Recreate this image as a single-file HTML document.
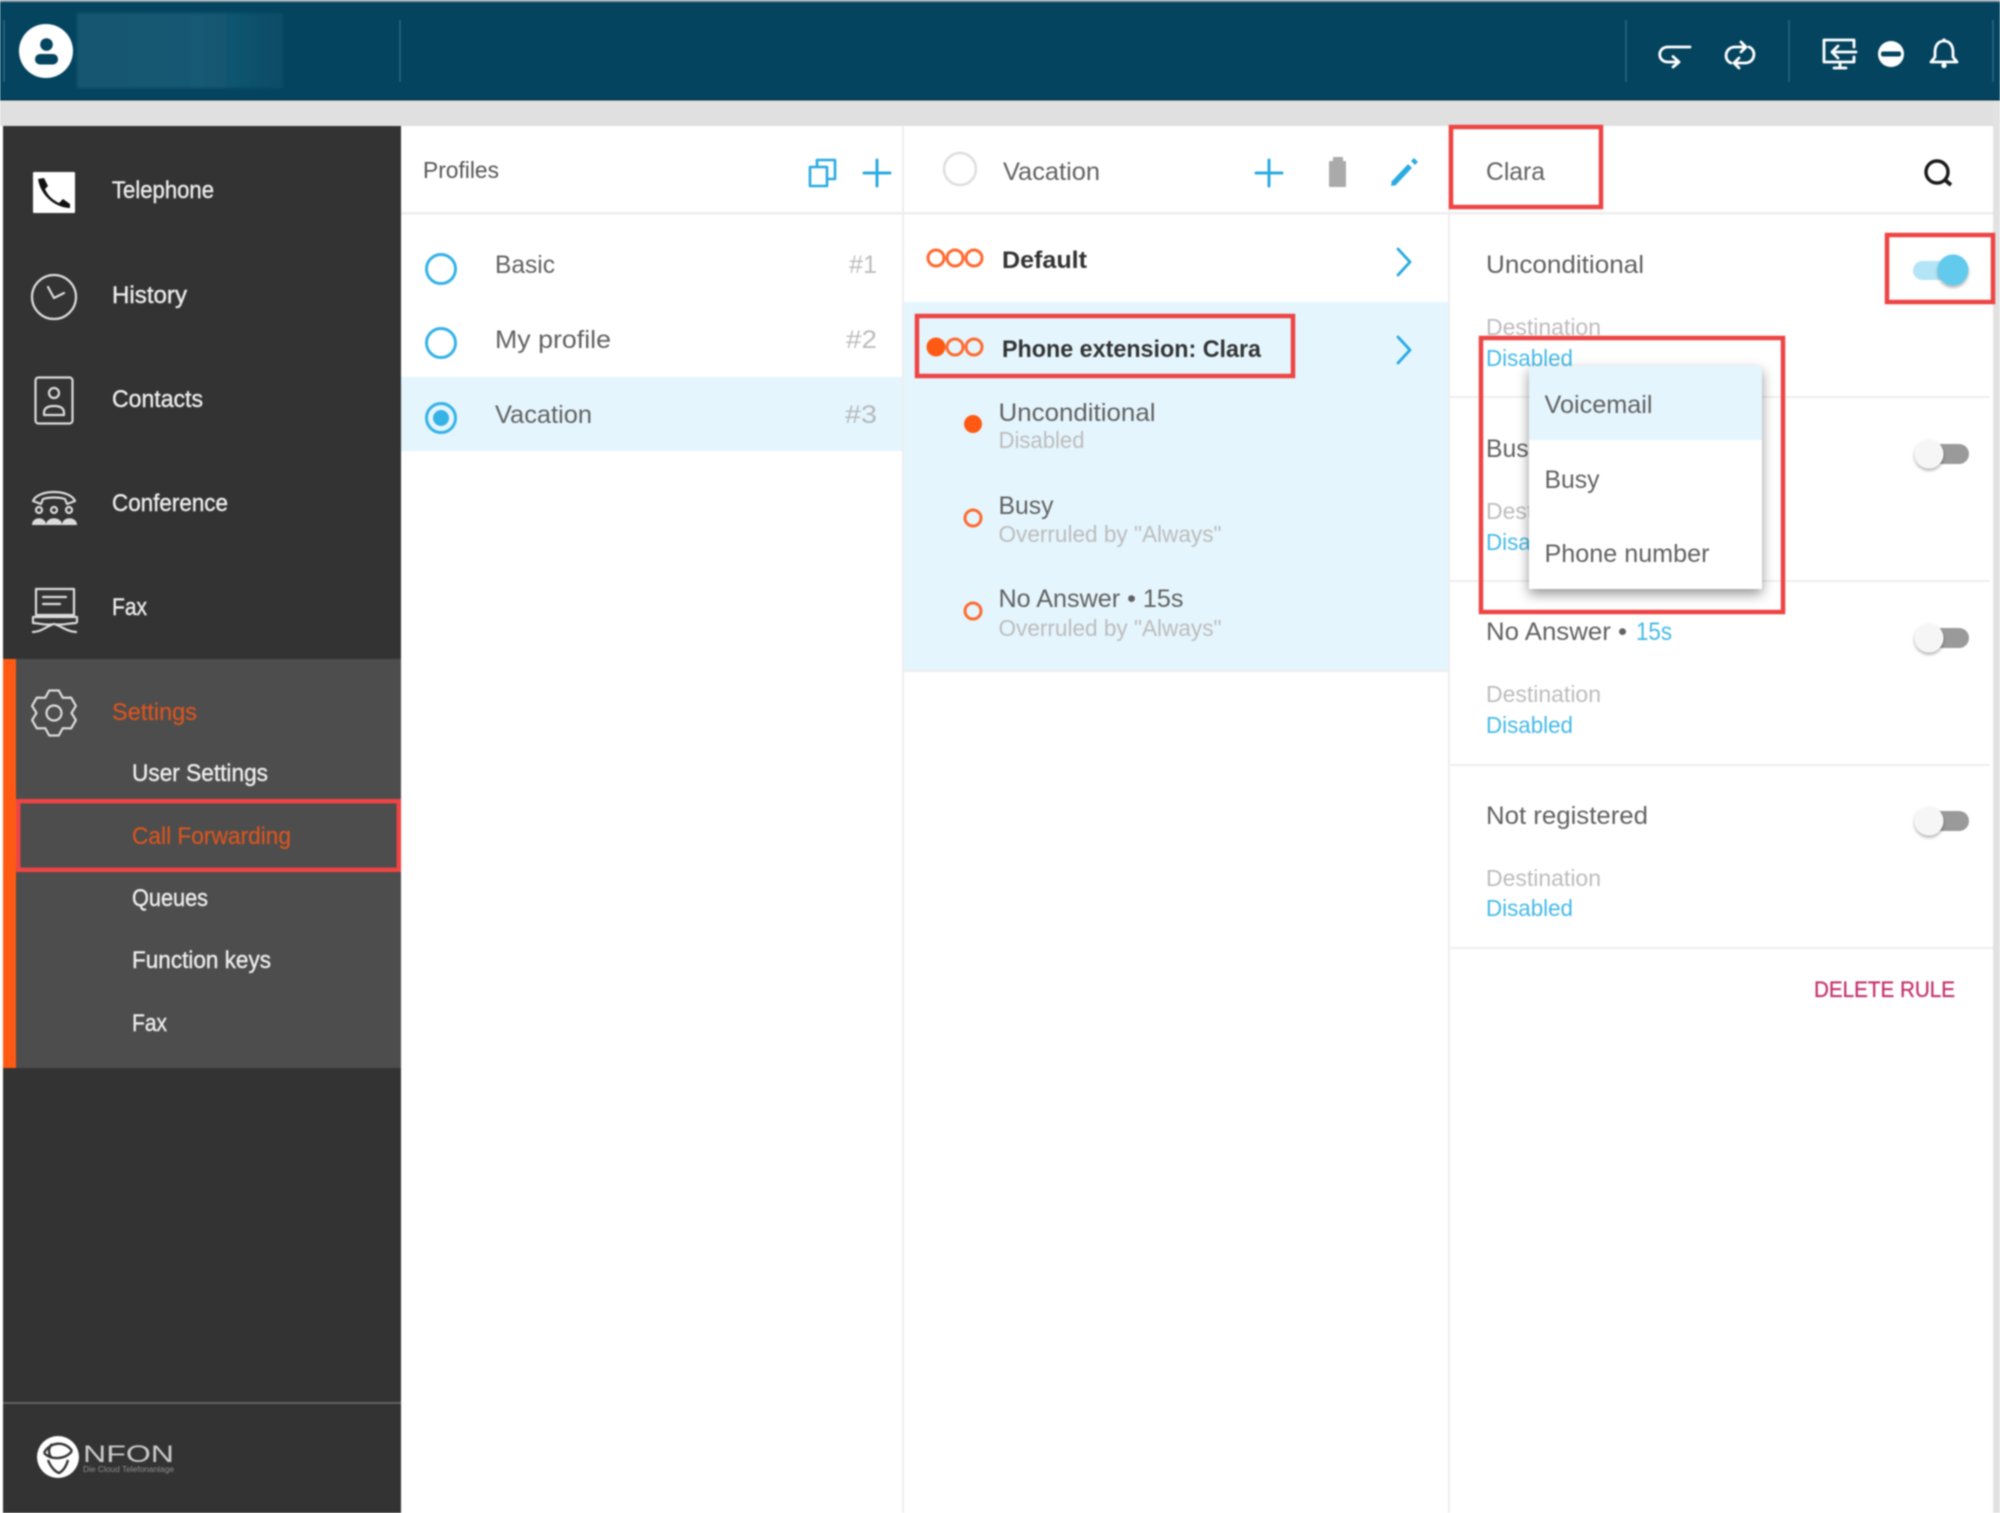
<!DOCTYPE html>
<html lang="en">
<head>
<meta charset="utf-8">
<title>Call Forwarding</title>
<style>
html,body{margin:0;padding:0;width:2000px;height:1513px;overflow:hidden;background:#fff}
svg{display:block;filter:blur(.8px)}
text{font-family:"Liberation Sans",Arial,sans-serif;font-size:25px;fill:#616161}
.side{fill:#ececec;font-size:24.5px;stroke:#ececec;stroke-width:.4}
.sub{font-size:23px;fill:#bcbcbc}
.blue{fill:#45b9e8}
.bold{font-weight:700;fill:#333;font-size:24.5px}
.side.or{fill:#d9551f;stroke:#d9551f;stroke-width:.2}
.ring{fill:none;stroke:#ff6a30;stroke-width:3}
.ico{fill:none;stroke:#dcdcdc;stroke-width:2.2;stroke-linejoin:round;stroke-linecap:round}
.hd{fill:none;stroke:#fff;stroke-width:2.8;stroke-linejoin:round;stroke-linecap:round}
.bl{fill:none;stroke:#2aaae2;stroke-width:3;stroke-linecap:round;stroke-linejoin:round}
.red{fill:none;stroke:#ee4444;stroke-width:4.5}
.sep{fill:#eeeeee}
</style>
</head>
<body>
<svg width="2000" height="1513" viewBox="0 0 2000 1513" xmlns="http://www.w3.org/2000/svg">
<defs>
<linearGradient id="nmg" x1="0" x2="1" y1="0" y2="0"><stop offset="0" stop-color="#14566f"/><stop offset=".6" stop-color="#155a74"/><stop offset="1" stop-color="#0a4c67"/></linearGradient>
<filter id="nm" x="-20%" y="-30%" width="140%" height="160%"><feGaussianBlur stdDeviation="1.5"/></filter>
<filter id="sh" x="-20%" y="-20%" width="140%" height="140%"><feDropShadow dx="0" dy="5" stdDeviation="6" flood-color="#000" flood-opacity=".42"/></filter>
<filter id="ks" x="-50%" y="-50%" width="200%" height="200%"><feDropShadow dx="0" dy="2" stdDeviation="1.6" flood-color="#000" flood-opacity=".32"/></filter>
</defs>

<!-- page backdrop -->
<rect width="2000" height="1513" fill="#fff"/>
<rect x="0" y="100" width="2000" height="26" fill="#e0e0e0"/>
<rect x="1993" y="100" width="7" height="1413" fill="#e2e2e2"/>

<!-- header -->
<rect width="2000" height="100" fill="#04445f"/>
<rect width="2000" height="2" fill="#8a9ca8"/>
<rect x="0" y="98.5" width="2000" height="2" fill="#033a52"/>
<g fill="#22607a">
<rect x="3" y="20" width="2" height="62"/><rect x="399" y="20" width="2" height="62"/>
<rect x="1625" y="20" width="2" height="62"/><rect x="1788" y="20" width="2" height="62"/><rect x="1992" y="20" width="2" height="62"/>
</g>
<rect x="77" y="13" width="206" height="75" fill="url(#nmg)" filter="url(#nm)"/>
<circle cx="46" cy="51" r="27" fill="#fff"/>
<circle cx="46.5" cy="44.5" r="6.3" fill="#04445f"/>
<rect x="35" y="54" width="23" height="10.5" rx="5" fill="#04445f"/>

<path class="hd" d="M1690 47H1668C1657 47 1657 62 1668 62H1678M1673 56.5L1679 62L1673 67"/>
<path class="hd" d="M1746 47H1735C1725 47 1723 60 1731 63M1741 42L1746 47L1741 52M1734 63H1745C1755 63 1757 50 1749 47M1739 58L1734 63L1739 68"/>
<path class="hd" d="M1854 47V40H1824V62H1854V57M1834 68H1846M1840 62V67M1856 52H1832M1838 46L1832 52L1838 58"/>
<circle cx="1891" cy="54" r="13" fill="#fff"/><rect x="1881" y="51.5" width="20" height="5" rx="2" fill="#04445f"/>
<path class="hd" d="M1944 41c-6 0-9 5-9 11v5l-4 5h26l-4-5v-5c0-6-3-11-9-11z"/><circle cx="1944" cy="65.5" r="2.6" fill="#fff"/><circle cx="1944" cy="40" r="1.6" fill="#fff"/>

<!-- sidebar -->
<rect x="3" y="126" width="398" height="1387" fill="#333"/>
<rect x="3" y="659" width="398" height="409" fill="#4d4d4d"/>
<rect x="3" y="659" width="13" height="409" fill="#ff5a14"/>
<rect x="3" y="1402" width="398" height="2" fill="#616161"/>

<rect x="33" y="172" width="42" height="41" rx="1" fill="#fff"/>
<path d="M38 179L44 178L48 186L45 189C48 196 53 200 59 203L63 199L70 204L70 208C58 208 41 198 38 179Z" fill="#111"/>
<text class="side" x="112" y="198" textLength="102" lengthAdjust="spacingAndGlyphs">Telephone</text>

<circle class="ico" cx="54" cy="297" r="22"/><path class="ico" d="M48 287L54 298L64 293"/>
<text class="side" x="112" y="303" textLength="75" lengthAdjust="spacingAndGlyphs">History</text>

<rect class="ico" x="35.5" y="377.5" width="37" height="46" rx="3"/><circle class="ico" cx="54" cy="393" r="5"/><path class="ico" d="M44 413c0-5 4-7 10-7s10 2 10 7v2h-20z"/>
<text class="side" x="112" y="407" textLength="91" lengthAdjust="spacingAndGlyphs">Contacts</text>

<path class="ico" d="M33 501c5-12 37-12 42 0l-8 3l-2-5c-6-2-16-2-22 0l-2 5z" stroke-width="2"/>
<g class="ico" stroke-width="1.8"><circle cx="39" cy="510" r="3"/><circle cx="54" cy="510" r="3"/><circle cx="69" cy="510" r="3"/></g>
<g fill="#dcdcdc"><path d="M32 525c0-9 14-9 14 0z"/><path d="M46 525c0-9 16-9 16 0z"/><path d="M62 525c0-9 15-9 15 0z"/></g>
<text class="side" x="112" y="511" textLength="116" lengthAdjust="spacingAndGlyphs">Conference</text>

<rect class="ico" x="36" y="589" width="38" height="26"/><path class="ico" d="M43 597H66M43 604H60M33 622V617H77V622M33 632c8 0 14-6 21-8c7 2 14 8 22 8M33 623c6 0 14 3 21 1c7 2 15-1 22-1"/>
<text class="side" x="112" y="615" textLength="35" lengthAdjust="spacingAndGlyphs">Fax</text>

<path class="ico" d="M49.2 690.5H58.8L62.75 697.8L71.1 697.6L75.9 705.9L71.5 713L75.9 720.1L71.1 728.4L62.75 728.2L58.8 735.5H49.2L45.25 728.2L36.9 728.4L32.1 720.1L36.5 713L32.1 705.9L36.9 697.6L45.25 697.8Z"/><circle class="ico" cx="54" cy="713" r="7.5"/>
<text class="side or" x="112" y="720" textLength="85" lengthAdjust="spacingAndGlyphs">Settings</text>
<text class="side" x="132" y="781" textLength="136" lengthAdjust="spacingAndGlyphs">User Settings</text>
<text class="side or" x="132" y="844" textLength="159" lengthAdjust="spacingAndGlyphs">Call Forwarding</text>
<rect class="red" x="18.2" y="801.2" width="380.6" height="68.6"/>
<text class="side" x="132" y="906" textLength="76" lengthAdjust="spacingAndGlyphs">Queues</text>
<text class="side" x="132" y="968" textLength="139" lengthAdjust="spacingAndGlyphs">Function keys</text>
<text class="side" x="132" y="1031" textLength="35" lengthAdjust="spacingAndGlyphs">Fax</text>

<circle cx="58" cy="1457" r="21" fill="#fff"/>
<path d="M44 1453c6-12 22-12 28-2M44 1453c8 8 22 6 28-2M48 1460c3 8 8 12 11 13c4-2 7-6 9-13M52 1444c-4 4-4 10 0 14" fill="none" stroke="#333" stroke-width="2.4"/>
<text x="83" y="1462" textLength="91" lengthAdjust="spacingAndGlyphs" style="font-size:24px;fill:#c9c9c9">NFON</text>
<text x="83" y="1472" textLength="91" lengthAdjust="spacingAndGlyphs" style="font-size:8px;fill:#8f8f8f">Die Cloud Telefonanlage</text>

<!-- column 1 -->
<rect x="401" y="212" width="1592" height="2.5" class="sep"/>
<rect x="902" y="126" width="2" height="1387" class="sep"/>
<rect x="1448" y="126" width="2" height="1387" class="sep"/>
<rect x="401" y="377" width="501" height="74" fill="#e4f5fd"/>
<text x="423" y="178" textLength="76" lengthAdjust="spacingAndGlyphs" style="font-size:23px;fill:#555">Profiles</text>
<path class="bl" d="M817 167V160H835V179H827M810 167H827V186H810Z" style="stroke-width:2.6"/>
<path class="bl" d="M877 160V186M864 173H890"/>
<circle cx="441" cy="269" r="14.5" fill="none" stroke="#35b2e6" stroke-width="3"/>
<circle cx="441" cy="343" r="14.5" fill="none" stroke="#35b2e6" stroke-width="3"/>
<circle cx="441" cy="418" r="14.5" fill="none" stroke="#35b2e6" stroke-width="3"/><circle cx="441" cy="418" r="8" fill="#35b2e6"/>
<text x="495" y="273" textLength="60" lengthAdjust="spacingAndGlyphs">Basic</text>
<text x="495" y="348" textLength="116" lengthAdjust="spacingAndGlyphs">My profile</text>
<text x="495" y="423" textLength="97" lengthAdjust="spacingAndGlyphs">Vacation</text>
<text x="849" y="273" textLength="28" lengthAdjust="spacingAndGlyphs" style="fill:#bcbcbc">#1</text>
<text x="846" y="348" textLength="31" lengthAdjust="spacingAndGlyphs" style="fill:#bcbcbc">#2</text>
<text x="845" y="423" textLength="32" lengthAdjust="spacingAndGlyphs" style="fill:#b4b8ba">#3</text>

<!-- column 2 -->
<circle cx="960" cy="169" r="16" fill="none" stroke="#dedede" stroke-width="2.5"/>
<text x="1003" y="180" textLength="97" lengthAdjust="spacingAndGlyphs">Vacation</text>
<path class="bl" d="M1269 160V186M1256 173H1282"/>
<rect x="1333" y="157" width="10" height="4" fill="#aaa"/><rect x="1329" y="161" width="17" height="26" rx="1" fill="#aaa"/>
<path d="M1393 184L1410 166" fill="none" stroke="#2aaae2" stroke-width="5.5"/><path d="M1413 163L1416 160" fill="none" stroke="#2aaae2" stroke-width="5.5"/>
<path d="M1391 186L1392 181L1396 185Z" fill="#2aaae2"/>

<circle class="ring" cx="936" cy="258" r="8"/><circle class="ring" cx="955" cy="258" r="8"/><circle class="ring" cx="974" cy="258" r="8"/>
<text class="bold" x="1002" y="268" textLength="85" lengthAdjust="spacingAndGlyphs">Default</text>
<path class="bl" d="M1398 249L1410 262L1398 275" style="stroke-width:2.8"/>

<rect x="904" y="302" width="544" height="368" fill="#e4f5fd"/>
<rect x="904" y="670" width="544" height="2" class="sep"/>
<circle cx="936" cy="347" r="9.5" fill="#ff5a14"/><circle class="ring" cx="955" cy="347" r="8"/><circle class="ring" cx="974" cy="347" r="8"/>
<text class="bold" x="1002" y="357" textLength="259" lengthAdjust="spacingAndGlyphs">Phone extension: Clara</text>
<path class="bl" d="M1398 337L1410 350L1398 363" style="stroke-width:2.8"/>
<rect class="red" x="917" y="316" width="376" height="60"/>

<circle cx="973" cy="424" r="9" fill="#ff5a14"/>
<text x="998.5" y="421" textLength="157" lengthAdjust="spacingAndGlyphs">Unconditional</text>
<text class="sub" x="998.5" y="448" textLength="86" lengthAdjust="spacingAndGlyphs">Disabled</text>
<circle class="ring" cx="973" cy="518" r="8"/>
<text x="998.5" y="514" textLength="55" lengthAdjust="spacingAndGlyphs">Busy</text>
<text class="sub" x="998.5" y="542" textLength="223" lengthAdjust="spacingAndGlyphs">Overruled by "Always"</text>
<circle class="ring" cx="973" cy="611" r="8"/>
<text x="998.5" y="607" textLength="185" lengthAdjust="spacingAndGlyphs">No Answer • 15s</text>
<text class="sub" x="998.5" y="636" textLength="223" lengthAdjust="spacingAndGlyphs">Overruled by "Always"</text>

<!-- column 3 -->
<rect class="red" x="1451" y="127" width="150" height="80"/>
<text x="1486" y="180" textLength="59" lengthAdjust="spacingAndGlyphs">Clara</text>
<circle cx="1937" cy="172" r="11" fill="none" stroke="#1a1a1a" stroke-width="3.4"/><path d="M1945 180L1951 185" stroke="#1a1a1a" stroke-width="3.8" fill="none"/>

<text x="1486" y="273" textLength="158" lengthAdjust="spacingAndGlyphs">Unconditional</text>
<rect class="red" x="1887" y="235" width="106" height="67"/>
<rect x="1913" y="261" width="52" height="19" rx="9.5" fill="#b3e5f7"/>
<circle cx="1953" cy="270" r="15.5" fill="#62cbed" filter="url(#ks)"/>
<text class="sub" x="1486" y="335" textLength="115" lengthAdjust="spacingAndGlyphs">Destination</text>
<text class="blue" x="1486" y="366" textLength="87" lengthAdjust="spacingAndGlyphs" style="font-size:23px">Disabled</text>
<rect x="1450" y="396" width="540" height="2" class="sep"/>

<text x="1486" y="457" textLength="55" lengthAdjust="spacingAndGlyphs">Busy</text>
<rect x="1921" y="444" width="48" height="20" rx="10" fill="#9a9a9a"/>
<circle cx="1929" cy="454" r="14.5" fill="#f6f6f6" filter="url(#ks)"/>
<text class="sub" x="1486" y="519" textLength="115" lengthAdjust="spacingAndGlyphs">Destination</text>
<text class="blue" x="1486" y="550" textLength="87" lengthAdjust="spacingAndGlyphs" style="font-size:23px">Disabled</text>
<rect x="1450" y="580" width="540" height="2" class="sep"/>

<text x="1486" y="640" textLength="141" lengthAdjust="spacingAndGlyphs">No Answer •</text>
<text class="blue" x="1636" y="640" textLength="36" lengthAdjust="spacingAndGlyphs">15s</text>
<rect x="1921" y="628" width="48" height="20" rx="10" fill="#9a9a9a"/>
<circle cx="1929" cy="638" r="14.5" fill="#f6f6f6" filter="url(#ks)"/>
<text class="sub" x="1486" y="702" textLength="115" lengthAdjust="spacingAndGlyphs">Destination</text>
<text class="blue" x="1486" y="733" textLength="87" lengthAdjust="spacingAndGlyphs" style="font-size:23px">Disabled</text>
<rect x="1450" y="764" width="540" height="2" class="sep"/>

<text x="1486" y="824" textLength="162" lengthAdjust="spacingAndGlyphs">Not registered</text>
<rect x="1921" y="811" width="48" height="20" rx="10" fill="#9a9a9a"/>
<circle cx="1929" cy="821" r="14.5" fill="#f6f6f6" filter="url(#ks)"/>
<text class="sub" x="1486" y="886" textLength="115" lengthAdjust="spacingAndGlyphs">Destination</text>
<text class="blue" x="1486" y="916" textLength="87" lengthAdjust="spacingAndGlyphs" style="font-size:23px">Disabled</text>
<rect x="1450" y="947" width="543" height="2" class="sep"/>

<text x="1814" y="997" textLength="141" lengthAdjust="spacingAndGlyphs" style="font-size:22px;fill:#c2336b;stroke:#c2336b;stroke-width:.3">DELETE RULE</text>

<!-- big highlight + dropdown -->
<rect class="red" x="1481" y="338" width="302" height="274"/>
<rect x="1529" y="366" width="233" height="223" fill="#fff" filter="url(#sh)"/>
<rect x="1529" y="366" width="233" height="74" fill="#e4f5fd"/>
<text x="1544.5" y="413" textLength="108" lengthAdjust="spacingAndGlyphs">Voicemail</text>
<text x="1544.5" y="488" textLength="55" lengthAdjust="spacingAndGlyphs">Busy</text>
<text x="1544.5" y="562" textLength="165" lengthAdjust="spacingAndGlyphs">Phone number</text>
</svg>
</body>
</html>
